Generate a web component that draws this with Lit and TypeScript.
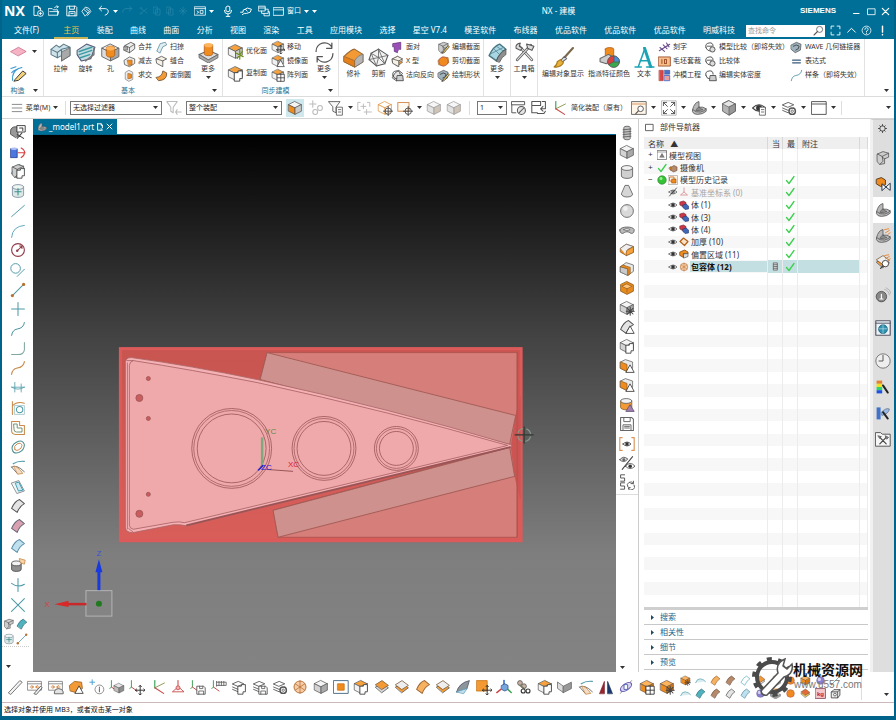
import { LitElement, html, svg, css, nothing } from "lit";
import { customElement, state } from "lit/decorators.js";
import { classMap } from "lit/directives/class-map.js";

const p = (d: string, fill = "none", stroke = "#555", w = 1.3) =>
  svg`<path d=${d} fill=${fill} stroke=${stroke} stroke-width=${w} stroke-linejoin="round" stroke-linecap="round"/>`;
const c = (x: number, y: number, r: number, fill = "none", stroke = "#555", w = 1.3) =>
  svg`<circle cx=${x} cy=${y} r=${r} fill=${fill} stroke=${stroke} stroke-width=${w}/>`;
const cube = (t: string, l: string, r: string, k = "#6b5a48") => svg`
  ${p("M10 2L18 6L10 10L2 6Z", t, k, 0.9)}${p("M2 6L10 10V18L2 14Z", l, k, 0.9)}${p("M18 6V14L10 18V10Z", r, k, 0.9)}`;
const sheet = (f: string, k: string) => p("M2 13Q6 4 12 2L18 7Q12 10 9 18Z", f, k, 1.3);
const slab = (f: string, g: string) => svg`${p("M2 10L10 5L18 11L10 17Z", g, "#555", 1)}${p("M2 7L10 2L18 8L10 13Z", f, "#7a5a3a", 1)}`;
const layersBase = svg`${p("M2 13L9 16L16 13M2 10L9 13L16 10", "none", "#555", 1.1)}${p("M2 6L9 3L16 6L9 9Z", "#fff", "#555", 1.1)}`;

const W = "#ffffff";
const P: Record<string, unknown> = {
  /* solids */
  cubeO: cube("#ffb45c", "#f08c1e", "#d9750f"),
  cubeG: cube("#f4f4f4", "#d3d3d3", "#a9a9a9", "#555"),
  cubeT: cube("#f6a13c", "#f1f1f1", "#c9c9c9", "#555"),
  cubeR: cube("#f4f4f4", "#f08c1e", "#c9c9c9", "#555"),
  cubeF: cube("#f6f6f6", "#e2e2e2", "#cfc4b8", "#999"),
  cubeW: cube("#fff", "#fff", "#fff", "#e0903c"),
  wedge: svg`${p("M2 9L9 4L18 7V14L9 18L2 14Z", "#f08c1e", "#8a5a20", 1)}${p("M2 9L9 4L18 7L12 10Q9 11 9 18", "#efefef", "#777", 1)}${p("M9 18Q8 11 13 10L18 7V14Z", "#f6a13c", "#8a5a20", 0.8)}`,
  frontO: svg`${p("M2 7L9 2L18 5V13L11 18L2 14Z", "#e9e9e9", "#666", 1)}${p("M2 7L11 10V18L2 14Z", "#c9c9c9", "#666", 0.8)}${p("M2 7L5 5L14 8V16L11 18V10Z", "#f08c1e", "#8a5a20", 0.9)}`,
  leftO: svg`${p("M2 5L8 2L17 5V13L10 17L2 13Z", "#e9e9e9", "#666", 1)}${p("M2 5L10 8V17L2 13Z", "#f08c1e", "#8a5a20", 0.9)}`,
  cyl: svg`${p("M3 5V15A7 3 0 0 0 17 15V5", "#cfcfcf", "#555", 1)}<ellipse cx="10" cy="5" rx="7" ry="3" fill="#f2f2f2" stroke="#555"/>`,
  cylO: svg`${p("M2 5V13A7 3 0 0 0 16 13V5", "#f39a35", "#8a5a20", 1)}<ellipse cx="9" cy="5" rx="7" ry="3" fill="#f2f2f2" stroke="#555"/>`,
  cylP: svg`${p("M3 5V15A7 3 0 0 0 17 15V5", "#dce8e6", "#789", 1)}<ellipse cx="10" cy="5" rx="7" ry="3" fill="#eef6f4" stroke="#789"/>${p("M10 7V15M6 11H14", "none", "#3c8f8f")}`,
  cylH: svg`${p("M2 8V15A6 3 0 0 0 14 15V8", "#8f8f8f", "#444", 1)}<ellipse cx="8" cy="8" rx="6" ry="3" fill="#f2f2f2" stroke="#444"/>${p("M12 2L19 4L18 9L13 7Z", "#f6d3a8", "#c98a4a", 1)}`,
  cone: p("M8 3H12L17 14A7 3.5 0 0 1 3 14Z", "#d6d6d6", "#555", 1),
  ball: svg`${c(10, 10, 8, "#d9d9d9", "#555", 1)}${c(8, 7, 3, "#f1f1f1", "none", 0)}`,
  ballO: c(10, 10, 7, "#f08a20", "#a55", 1),
  ballP: svg`${c(10, 10, 7, "#8a7fd0", "#669", 1)}${c(8, 8, 3, "#d6d2f4", "none", 0)}`,
  torus: svg`${p("M1 10C1 5 19 5 19 10C19 15 15 15 13 13C11 12 9 12 7 13C5 15 1 15 1 10Z", "#bdbdbd", "#555", 1)}${p("M6 9.500C8 8 12 8 14 9.500C12 11 8 11 6 9.500Z", "#fff", "#555", 0.8)}`,
  spring: svg`${p("M6 3A4 1.500 0 0 1 14 3V17A4 1.500 0 0 1 6 17Z", "#c4c4c4", "#555", 1)}${p("M5 6L15 5M5 9L15 8M5 12L15 11M5 15L15 14", "none", "#555", 1)}`,
  shell: svg`${p("M10 2L18 6V14L10 18L2 14V6Z", "#e88a1e", "#8a5a20", 1)}${p("M10 5L16 8L10 11L4 8Z", "#ffc078", "#8a5a20", 0.8)}${p("M10 11V15", "none", "#8a5a20", 0.8)}`,
  extrude: svg`${p("M1 7L6 3L9 5L13 2L19 5V13L11 18V13L7 15L1 12Z", "#cfe3ea", "#5d7a86", 1)}${p("M1 7L7 10L11 7L11 13M7 10V15M11 7L19 5", "none", "#5d7a86", 1)}${p("M11 10V18L19 13V6Z", "#a9a9a9", "#666", 0.8)}`,
  revolve: svg`${p("M2 8L11 2L19 5L15 16L6 18L2 12Z", "#c4dde0", "#557", 1)}${p("M4 9L16 5M4 12L16 8M5 15L14 12", "none", "#3d9aa5", 1.4)}${p("M10 18L18 12V6", "none", "#777", 1.4)}`,
  bore: svg`${cube("#efefef", "#dcdcdc", "#a5a5a5", "#666")}${p("M6 6A4 2 0 0 1 14 6V12A4 2.500 0 0 1 6 12Z", "#f08c1e", "#b4611a", 0.8)}<ellipse cx="10" cy="6" rx="4" ry="2" fill="#ffb45c"/>`,
  boss: svg`${p("M1 12L10 8L19 12L10 17Z", "#ddd", "#666", 1)}${p("M1 12V15L10 20L19 15V12L10 17Z", "#aaa", "#666", 0.8)}${p("M6 3V11A4 2 0 0 0 14 11V3Z", "#f08c1e", "#b4611a", 0.8)}<ellipse cx="10" cy="3" rx="4" ry="2" fill="#ffb45c"/>`,
  cap: p("M2 8L8 3L17 4L18 12L10 17L3 15Z", "#f39a35", "#9a5a15", 1),
  patch: svg`${p("M1 9Q8 2 11 2L19 7V14L11 19L1 14Z", "#f39a35", "#9a6a35", 1)}${p("M11 19V13Q14 8 19 7V14Z", "#b5b5b5", "#777", 0.8)}${p("M1 9L11 13V19L1 14Z", "#e8801a", "#9a6a35", 0.8)}`,
  mesh: svg`${p("M10 2L19 8L16 16L8 18L1 12L3 6Z", "#f3f3f3", "#555", 1)}${p("M3 6L10 10L19 8M10 2V10L1 12M10 10L8 18M10 10L16 16M3 6L8 18M10 2L16 16", "none", "#666", 0.8)}`,
  shoe: svg`${p("M2 12Q4 3 10 2L10 9Q15 8 19 11V14Q15 18 8 18Q3 18 2 15Z", "#b8b8b8", "#555", 1)}${p("M2 12Q6 16 12 15Q17 14 19 11", "none", "#555", 1)}${p("M10 9Q7 10 6 13Q11 14 15 12Q12 11 10 9Z", "#8c8c8c", "#555", 0.8)}`,
  block: svg`${p("M3 5L10 2L17 4V9L12 11V17L6 18L3 15Z", "#cdcdcd", "#555", 1)}${p("M3 5L9 8L17 4M9 8L10 14L6 18M12 11L9 9", "none", "#555", 1)}`,
  slabO: slab("#f39a35", "#d5d5d5"),
  slabG: slab("#eee", "#f39a35"),
  slabR: slab("#e06a3a", "#f2c14e"),
  sheetO: sheet("#f7b25f", "#a0683a"),
  sheetB: sheet("#bfe0ee", "#5a8fa6"),
  sheetG: sheet("#e4e4e4", "#555"),
  sheetT: sheet("#4fb3bf", "#33727c"),
  sheetP: sheet("#d9a0b0", "#667"),
  sheetW: sheet("#ffffff", "#5fb0c0"),
  sheetD: sheet("#b58a6a", "#7a5a45"),
  blade: svg`${p("M2 16Q5 5 18 2L15 12Z", "#8b959b", "#556", 1)}${p("M2 16L15 12L11 18Z", "#bfe0ee", "#4f8fae", 0.8)}`,
  purple: p("M3 4L15 2V13Q10 12 10 18L5 16V9H3Z", "#9b50b8", "#5a2a70", 1),
  pinkd: p("M1 10L10 5L19 10L10 15Z", "#f6b3c4", "#c8698a", 0.9),
  sqO: svg`${p("M1 2H19V18H1Z", W, "#4a6f8a", 1.2)}${p("M6 6H14V14H6Z", "#f08c1e", "#c9700f", 1)}`,
  sqM: p("M1 2H14V15H1Z", "#f39a35", "#c9700f", 1),
  skewG: svg`${p("M1 4L8 9V17L1 12Z", "#ddd", "#666", 1)}${p("M8 9L18 4V12L8 17Z", "#999", "#666", 1)}`,
  quilt: svg`${sheet("#a8d6e2", "#4a7480")}${p("M7 7L13 13M4 11L16 5M9 4L16 9", "none", "#5c8c98", 0.8)}${p("M9 18Q12 10 18 7V12Q14 14 12 19Z", "#8f8f8f", "#555", 0.8)}`,

  /* modifiers drawn at the lower right */
  copy: p("M9 9H13V7H18V16H15V19H9Z", W, "#444", 1.1),
  tri: p("M14 9L19 18H9Z", W, "#444", 1.1),
  triP: p("M14 10L19 18H9Z", "#a080b0", "#604a70", 1),
  star: p("M14 9V19M9 14H19M10.500 10.500L17.500 17.500M17.500 10.500L10.500 17.500", "none", "#444", 1.3),
  move: p("M14 8V20M8 14H20M12.500 9.500L14 8L15.500 9.500M12.500 18.500L14 20L15.500 18.500M9.500 12.500L8 14L9.500 15.500M18.500 12.500L20 14L18.500 15.500", "none", "#333", 1.2),
  grid: p("M9 9H19V19H9ZM14 9V19M9 14H19", W, "#333", 1.1),
  lens: svg`${c(13, 12, 4, W, "#444", 1.2)}${p("M10 15L7 18", "none", "#444", 1.6)}`,
  tgt: svg`${c(14, 14, 4, "none", "#444", 1.1)}${p("M14 8V20M8 14H20", "none", "#444", 1.1)}`,
  disk: svg`${p("M9 9H17L19 11V19H9Z", W, "#555", 1.1)}${p("M12 9V12H16V9M11 19V15H17V19", "none", "#555", 1)}`,
  cog: svg`${c(14, 14, 4, W, "#555", 1.8)}${c(14, 14, 1.500, "none", "#555", 1)}`,
  pen: p("M9 17L17 7L19 9L11 18L8 19Z", "#f5d26a", "#333", 1.1),
  spark: p("M12 18L18 10M11 12L19 16M15 8V19", "none", "#6e8f1a", 1.4),
  calc: p("M11 9H18V19H11ZM13 12H16M13 15H16", W, "#555", 1),

  /* curves */
  line: p("M2 17L18 3", "none", "#4f9aa8", 1.2),
  arc: p("M2 18Q3 4 18 3", "none", "#5fa6b8", 1.2),
  circ: svg`${c(10, 10, 8, "none", "#903a48", 1.4)}${c(9, 11, 1.500, "#903a48", "none", 0)}${p("M9 11L15 5M12 5H15V8", "none", "#903a48", 1.3)}`,
  tang: svg`${c(7, 8, 6, "none", "#4f9aa8", 1.2)}${p("M9 18L18 9", "none", "#4f9aa8", 1.2)}`,
  seg: svg`${p("M3 17L17 3", "none", "#4f9aa8", 1.3)}${c(3, 17, 2, "#b87333", "none", 0)}${c(17, 3, 2, "#b87333", "none", 0)}`,
  plus: p("M10 2V18M2 10H18", "none", "#4f9aa8", 1.3),
  spl: p("M2 18Q3 11 9 10Q17 9 18 2", "none", "#3f8c9c", 1.2),
  jcv: p("M18 2V11Q17 17 10 17H2", "none", "#7fa8a0", 1.3),
  splO: p("M2 18Q3 11 9 10Q17 9 18 2", "none", "#c98a4a", 1.4),
  cross2: p("M6 3V15M2 9H18M14 5V15M2 9Q10 14 18 9", "none", "#4f9aa8", 1),
  prjc: svg`${p("M3 2V18M3 7Q9 1 18 4", "none", "#c98a4a", 1.3)}${c(12, 12, 4, "none", "#4f9aa8", 1.3)}${p("M6 7H18V18H6Z", "none", "#8fb9c0", 0.9)}`,
  offs: svg`${p("M2 2H12V7H18V18H7Q2 18 2 13Z", "none", "#c98a4a", 1.3)}${p("M5 5H9V10H15V15H8Q5 15 5 12Z", "none", "#6f8f6f", 1.2)}`,
  ringc: svg`${p("M3 14Q1 8 8 4Q16 0 18 7Q18 14 11 17Q5 19 3 14Z", "none", "#4f8f90", 1.3)}${p("M6 13Q4 9 9 6Q14 4 15 8Q15 12 10 14Q7 15 6 13Z", "none", "#c98a4a", 1.2)}`,
  sec: svg`${p("M2 10Q8 6 18 16M2 10L9 18", "none", "#555", 1)}${p("M5 9Q10 9 16 18L10 19Z", "#f4dcc4", "#c98a4a", 1)}${p("M4 6Q10 2 18 3", "none", "#4f9aa8", 1.4)}`,
  sheetV: svg`${p("M2 5L11 2L18 15L9 18Z", "#eef7f9", "#777", 1)}${p("M7 5L11 4L16 14L11 15Z", "#cfeaf0", "#3b9ab0", 1.2)}`,
  xcv: p("M2 2L18 18M18 2L2 18", "none", "#4f9aa8", 1.3),
  xlate: p("M10 2V18M2 8Q10 14 18 9", "none", "#4f9aa8", 1.3),
  bl: p("M1 14Q4 6 10 7T19 12", "#d8ecef", "#4f9aa8", 1.2),
  sketch: svg`${p("M3 18Q2 8 10 4M1 4L7 2M2 9Q6 5 14 3", "none", "#3b9ad0", 1.3)}${p("M6 17L15 7L19 10L10 18L5 19Z", "#f3d27a", "#333", 1.1)}`,

  /* datum, measuring and view */
  csys: svg`${p("M6 2V11", "none", "#38a050", 1.4)}${p("M6 11L18 5", "none", "#8a9a50", 1.2)}${p("M6 11L17 18", "none", "#c84848", 1.4)}`,
  axes: svg`${p("M10 2V10", "none", "#c84848", 1.3)}${p("M10 10L3 16H17Z", "none", "#c84848", 1.1)}${c(10, 11, 2.500, "#f5b0b0", "#c84848", 1)}`,
  small: svg`${p("M3 2V10L1 12", "none", "#38a050", 1.2)}${p("M3 10L10 15", "none", "#c84848", 1.2)}`,
  part: svg`<g transform="translate(5 4) scale(.75)">${cube("#e4e4e4", "#bdbdbd", "#8e8e8e", "#555")}</g>`,
  bluec: svg`${p("M10 2V8", "none", "#3a6fd0", 2)}${p("M7 8L11 6L15 8V13L11 15L7 13Z", "#7aa6e0", "#2a4f90", 1)}${p("M6 13L1 17", "none", "#c84848", 1.8)}${p("M15 13L19 17", "none", "#38a050", 1.8)}`,
  ruler: p("M2 17L16 2L19 4L5 19Z", "#f4f4f4", "#666", 1.1),
  ruler2: p("M9 18L17 9L19 11L12 19Z", "#f4f4f4", "#555", 1.1),
  dome: p("M8 18V16Q9 12 13 12Q18 12 19 16V18Z", "#e4e4e4", "#555", 1.1),
  meas: svg`${p("M1 3H18V14H1ZM1 6H18", W, "#777", 1)}${p("M4 10H8M11 10H15M6 8L8 10L6 12M13 8L11 10L13 12", "none", "#d07a30", 1.1)}`,
  info: svg`${c(13, 13, 5.500, W, "#777", 1)}${p("M13 12V16M13 10V10.500", "none", "#666", 1.3)}${p("M4 1V7M1 4H7", "none", "#3b9ad0", 1.1)}`,
  note: p("M7 3V9M7 4H19V8H7M10 3V8M13 3V8M16 3V8", "none", "#555", 1),
  layers: layersBase,
  mirror: svg`${p("M2 18L8 3V18Z", "#9a2430", "#70141e", 0.8)}${p("M18 18L12 3V18Z", "#1c3a70", "#10244a", 0.8)}`,
  orbit: svg`${p("M3 18L17 2", "none", "#777", 1)}<ellipse cx="10" cy="10" rx="8" ry="4" transform="rotate(-35 10 10)" fill="#d9d4f0" stroke="#6a5fb0" stroke-width="1.500"/>${p("M8 7H12V13H8Z", W, "#3b56a8", 1)}`,
  people: svg`${c(5, 5, 3, "#c9b0a0", "#555", 1)}${c(10, 9, 3, "#c5b5a5", "#555", 1)}${p("M5 8L10 12", "none", "#776", 2)}${c(9, 15, 2.500, W, "#333", 1.4)}${c(15, 15, 2.500, W, "#333", 1.4)}`,
  eye: svg`${p("M2 10Q10 2 18 10Q10 18 2 10Z", W, "#444", 1.4)}${c(10, 10, 3.500, "#333", "#333", 0.5)}`,
  eyeBr: svg`${p("M4 2H1V18H4M16 2H19V18H16", "none", "#d9935a", 1.4)}${p("M5 10Q10 5 15 10Q10 15 5 10Z", W, "#444", 1.1)}${c(10, 10, 2.200, "#333", "none", 0)}`,
  eyeOff: svg`${p("M2 10Q10 2 18 10Q10 18 2 10Z", W, "#444", 1.4)}${c(10, 10, 3.500, "#888", "#333", 0.5)}${p("M3 18L17 2", "none", "#333", 1.6)}`,
  eyeSw: svg`${p("M4 18L17 2", "none", "#444", 1.3)}${p("M1 6Q5 0 11 5Q6 11 1 6Z", "#ddd", "#444", 1)}${c(6, 6, 1.800, "#666", "none", 0)}${p("M8 14Q14 7 20 14Q14 20 8 14Z", W, "#444", 1)}${c(14, 14, 2.200, "#333", "none", 0)}`,
  ss: svg`${p("M7 1H2V5H7V9H2M7 11H2V15H7V19H2", "none", "#555", 1.2)}${p("M11 16A4 4 0 0 1 18 12M18 9V12H15M19 14A4 4 0 0 1 12 18M12 19V17H14", "none", "#555", 1.2)}`,
  floppy: svg`${p("M2 2H16L18 4V18H2Z", W, "#666", 1.3)}${p("M6 2V7H14V2M5 18V11H15V18M7 13H13M7 15H13", "none", "#666", 1.2)}`,
  brackD: p("M4 3H1V13H4M13 3H16V8M8 5V11M5 8H11M12 12V18M9 15H18", "none", "#bbb", 1.2),
  linkG: svg`${p("M6 1V9M2 5H10", "none", "#bbb", 1.3)}${c(15, 10, 3, "none", "#bbb", 1.3)}${c(9, 15, 3, "none", "#bbb", 1.3)}`,
  funnel: p("M1 2H15L10 9V16L6 14V9Z", "#f8f8f8", "#666", 1.2),
  funnelG: svg`${p("M1 2H14L9 9V16L6 14V9Z", "none", "#bbb", 1.3)}${p("M12 15H19M14 12L12 15L14 18", "none", "#bbb", 1.3)}`,
  rectO: p("M1 3H15V14H1Z", "#fffaf2", "#d9935a", 1.3),
  ban: svg`${p("M1 2H17V6H1ZM1 6V16H6", W, "#555", 1.2)}${c(13, 13, 5, "#e6e6e6", "#555", 1.3)}${p("M10 16L16 10", "none", "#555", 1.3)}`,
  swap: p("M1 2H12V7H1ZM1 7V16H8M14 2H18V11H12M15 8L12 11L15 14M8 17H16L18 14", "none", "#555", 1.3),
  fitS: svg`${p("M1 2H19V18H1Z", "#fff6ea", "#666", 1.2)}${p("M1 5H19", "none", "#d9935a", 1.2)}${c(12, 11, 3.500, W, "#555", 1.2)}${p("M9 14L6 17", "none", "#555", 1.5)}`,
  fitF: svg`${p("M1 1H19V19H1Z", "none", "#999", 0.8)}${p("M3 7V3H7M13 3H17V7M17 13V17H13M7 17H3V13M3 3L8 8M17 3L12 8M17 17L12 12M3 17L8 12", "none", "#444", 1.1)}`,
  hex: svg`${p("M10 1L18 5V14L10 19L2 14V5Z", "#b5b5b5", "#555", 1)}${p("M10 1L18 5L10 9L2 5Z", "#e5e5e5", "#555", 0.8)}${p("M10 9V19L18 14V5Z", "#989898", "#555", 0.8)}`,
  win: svg`${p("M1 2H19V18H1Z", W, "#555", 1.2)}${p("M1 5H19", "none", "#555", 1.2)}`,
  box: p("M2 3H18V17H2Z", W, "#444", 1.8),

  /* ribbon specials */
  cycle: p("M2 9A8 8 0 0 1 17 5M17 1V6H12M18 11A8 8 0 0 1 3 15M3 19V14H8", "none", "#555", 1.2),
  tools: svg`${p("M4 3L17 17", "none", "#555", 2.6)}${p("M4 3L17 17", "none", "#eee", 1.2)}${p("M16 3L3 17", "none", "#555", 2.6)}${p("M16 3L3 17", "none", "#ddd", 1.2)}${p("M2 6Q1 2 6 1L5 4L8 6L6 8ZM12 2L19 4L17 8L13 6Z", "#ddd", "#555", 1)}`,
  brush: svg`${p("M19 1L10 11", "none", "#7a6a4a", 2)}${p("M11 9L13 11L8 15L7 13Z", "#ddd", "#666", 1)}${p("M7 12L10 15Q7 20 1 19Q4 17 4 14Z", "#e8b23a", "#a8761a", 1)}`,
  palette: svg`${p("M6 2V8A4 2 0 0 0 14 8V2A4 1.500 0 0 0 6 2Z", "#f08c1e", "#b4611a", 0.8)}${p("M1 11L9 7L14 10L7 16L1 14Z", "#ccc", "#666", 1)}${c(14, 14, 5.500, "#3aa850", "#555", 0.8)}${p("M14 14V8.500A5.500 5.500 0 0 1 19.500 14Z", "#4a90d8", "#555", 0.6)}${p("M14 14L9 17A5.500 5.500 0 0 1 14 8.500Z", "#d84040", "#555", 0.6)}`,
  letterA: svg`${p("M1 19H7M12 19H19M4 19L10 2.500", "none", "#1ba3b5", 1.4)}${p("M10 1L16 19", "none", "#1ba3b5", 2.8)}${p("M6 13H13", "none", "#1ba3b5", 1.4)}`,
  engr: p("M2 15L18 5M3 10L10 16M8 6L14 12M13 3L17 9", "none", "#6a4a8a", 1.6),
  blank: svg`${p("M1 3H19V17H1Z", "#f7c08a", "#a0522d", 1.4)}${p("M6 7V13M10 7V13H13V7Z", "none", "#a0522d", 1.6)}`,
  punch: svg`${p("M2 2H8V18H2Z", "#d84848", "#a03030", 0.8)}${p("M10 2H18V8H10Z", "#4a70c8", "#2a4080", 0.8)}${p("M10 10H18V18H10Z", "#e8a0a0", "#4a70c8", 1.4)}`,
  comp: svg`${p("M3 10Q1 4 8 3Q14 2 14 8M3 10Q5 16 10 15", "none", "#444", 1.4)}${c(13, 13, 4, "#ddd", "#444", 1.3)}${p("M5 8H12", "none", "#444", 1.3)}`,
  dens: svg`${p("M3 10Q1 4 8 3Q14 2 14 8M3 10Q5 16 8 15", "none", "#444", 1.4)}${p("M10 10H18L19 18H9Z", "#ccc", "#444", 1.3)}`,
  wave: svg`${p("M2 6L10 2L17 5L16 14L8 18L2 13Z", "#9fb3bf", "#444", 1)}${p("M5 8Q10 4 14 8Q14 13 9 14", "none", "#444", 1.4)}`,
  eq: p("M4 8H16M4 12H16", "none", "#3a5a7a", 1.8),
  union: svg`${p("M3 7L12 2L18 5V12L10 18L3 15Z", "#ececec", "#555", 1.3)}${p("M3 7L10 10L18 5M10 10V18", "none", "#555", 1.2)}${p("M1 9H7V14H1Z", "#b0b0b0", "#555", 1)}`,
  subt: svg`${p("M2 8L10 3L18 6V13L10 18L3 15Z", "#ececec", "#555", 1.2)}${p("M7 8H14V15L9 16Z", "#f08c1e", "#a05a1a", 1)}`,
  inter: svg`${p("M4 5L9 2L15 5V16L9 19L4 16Z", "#ececec", "#888", 1.2)}${p("M8 7L13 8V14L8 15Z", "#f08c1e", "#a05a1a", 1)}`,
  sweep: p("M3 15L8 4L16 2L18 6L12 9L8 18Z", "#dfeef2", "#5d8a9a", 1.2),
  sew: svg`${p("M2 6L10 2L18 6L12 9V18L3 13Z", "#f7f2e6", "#555", 1.3)}${p("M2 6L12 9", "none", "#555", 1.2)}`,
  blend: p("M2 13Q11 12 12 3L18 6Q19 17 6 18Z", "#f39a35", "#6a4a2a", 1.2),

  /* title bar, white */
  tNew: svg`${p("M8 16H3V2H10L13 5V8M10 2V5H13", "none", W, 1.4)}${c(13, 13, 4.500, "none", W, 1.3)}${p("M13 11V15M11 13H15", "none", W, 1.3)}`,
  tOpen: p("M1 6H7L9 8H16V17H1ZM3 11H18L16 17M11 4Q13 2 17 3M15 1L17 3L15 5", "none", W, 1.4),
  tSave: p("M2 2H16L18 4V18H2ZM6 2V7H14V2M5 18V11H15V18M8 14H12", "none", W, 1.5),
  tPlane: p("M2 9L8 2L14 4L17 8L8 18ZM6 7L12 12M9 5L14 9M12 17L18 10", "none", W, 1.5),
  tUndo: p("M6 2L2 6L6 10M2 6H12Q18 7 17 12Q16 16 12 17", "none", W, 1.5),
  tRedo: p("M14 2L18 6L14 10M18 6H8Q2 7 3 12", "none", W, 1.4),
  tCut: p("M4 5L16 14M4 14L16 5M2 14A2 2 0 1 0 6 15M2 5A2 2 0 1 1 6 5", "none", W, 1.4),
  tDoc: p("M3 2H11V14H3ZM8 6H16V18H8Z", "none", W, 1.4),
  tPage: p("M4 2H13L16 6V12M4 2V18H10M13 14L16 18L10 18M13 2V6H16", "none", W, 2.4),
  tStar: p("M10 2V18M2 10H18M5 5L15 15M15 5L5 15", "none", W, 1.3),
  tWin: p("M1 3H19V17H1ZM1 6H19M5 10L8 12L5 14M11 9H15V14H11Z", "none", W, 1.3),
  tMic: p("M7 3Q10 0 13 3V10Q10 13 7 10ZM4 9Q4 15 10 15Q16 15 16 9M10 15V19M7 19H13", "none", W, 1.6),
  tPlug: p("M1 12H5Q4 7 9 7L12 5L19 7L17 12L11 14H7L4 16M9 7L12 10", "none", W, 1.6),
  tCasc: p("M1 2H12V10H1ZM1 5H12M6 10V14H17V7H12M10 14V18H19V11H17", "none", W, 1.4),
  tFrame: p("M1 3H19V17H1ZM1 7H19", "none", W, 1.5),
  tFit: p("M2 7V2H7M13 2H18V7M18 13V18H13M7 18H2V13", "none", W, 1.6),
  tUp: p("M3 13L10 6L17 13", "none", W, 1.8),
  tHelp: svg`${c(10, 10, 8, "none", W, 1.4)}${p("M7 8Q7 5 10 5Q13 5 13 8Q13 10 10 11V12.500M10 15V15.500", "none", W, 1.5)}`,
  tBang: p("M10 2V13M10 17V18", "none", W, 2.6),
  tMin: p("M3 15H14", "none", W, 2.2),
  tMax: p("M2 4H18V17H2Z", "none", W, 1.8),
  tX: p("M3 3L17 17M17 3L3 17", "none", W, 2.8),
  search: svg`${c(12, 8, 5.500, "none", "#555", 1.4)}${p("M8 12L2 18", "none", "#555", 2.4)}`,
  burger: p("M2 4H18M2 10H18M2 16H18", "none", "#777", 1.4),

  /* navigator */
  chk: p("M3 11L8 17L18 3", "none", "#3ccf4e", 2.6),
  dotG: svg`${c(10, 10, 8.500, "#35c235", "#2a7a2a", 1.2)}${c(8, 7, 3, "#9af09a", "none", 0)}`,
  view: svg`${p("M1 1H19V19H1Z", W, "#444", 1.2)}${p("M1 4H19", "none", "#444", 1)}${p("M6 14L10 7L14 14Z", "#888", "#444", 1)}`,
  cam: svg`${p("M5 9L12 5L18 8V15L11 18L5 14Z", "#b58a6a", "#6a4a3a", 1.2)}${p("M2 10L6 7V14Z", "#f08c1e", "#6a4a3a", 1)}`,
  hist: svg`${p("M1 1H19V19H1Z", "#fff3e6", "#999", 1.2)}${p("M4 4H12V12H4Z", "#fff", "#d07a30", 2)}${p("M8 8H16V16H8Z", "#f08c1e", "#8a4a1a", 1.2)}`,
  datum: p("M10 2V10L3 16H17L10 10", "none", "#d88a8a", 1.6),
  body: svg`${p("M2 4L9 2L14 5V12L7 13L2 10Z", "#c83848", "#70202a", 1.2)}${p("M8 10L14 8L19 12V18L12 19L8 15Z", "#4068b8", "#203a70", 1.2)}`,
  thick: p("M2 9L9 2L18 9L11 17Z", "#fbe3c8", "#b4611a", 2.4),
  offr: svg`${p("M2 6L11 2L18 6V10L9 9V17L2 13Z", "#f08c1e", "#6a3a10", 1.4)}${p("M9 10L18 9V15L10 18Z", "#ddd", "#444", 1.2)}`,
  wrapb: svg`${c(10, 10, 7.500, "#f7cda8", "#b4713a", 1.2)}${p("M4 6L16 14M16 6L4 14M10 2V18", "none", "#b4713a", 1)}`,
  tower: p("M6 2H14V18H6ZM6 6H14M6 10H14M6 14H14", "#ddd", "#555", 1.6),

  /* resource bar */
  gear: svg`${c(10, 10, 6, "none", "#444", 2)}${p("M10 1V4M10 16V19M1 10H4M16 10H19M4 4L6 6M14 14L16 16M16 4L14 6M4 16L6 14", "none", "#444", 2)}`,
  constr: svg`${p("M2 4L8 2L13 5V11L7 13L2 10Z", "#f08c1e", "#5a3a1a", 1.2)}${p("M9 10L19 18V9L9 18Z", W, "#234", 1.2)}`,
  glow: p("M12 2L17 1M13 6L18 3M19 6L16 8", "none", "#e88a3a", 1.2),
  radio: svg`${c(8, 12, 6.500, "#888", "#444", 1)}${p("M8 9V15M6 15H10", "none", W, 1.4)}${p("M12 3Q17 4 18 10M14 1Q19 3 20 8", "none", "#aaa", 1)}`,
  web: svg`${p("M1 1H19V19H1Z", "#eaf2f5", "#556", 1.4)}${p("M1 4H19", "none", "#556", 1.2)}${c(10, 11.500, 5.500, "#2f8fae", "#1a5f7a", 1)}${p("M5 11H15M10 6V17", "none", "#bfe6f0", 0.8)}`,
  clock: svg`${c(10, 10, 9, "#eee", "#777", 1.2)}${p("M10 3V10H5", "none", "#555", 1.2)}`,
  rain: svg`${p("M2 2H9V6H2Z", "#e08030", "none", 0)}${p("M2 6H9V10H2Z", "#f0e020", "none", 0)}${p("M2 10H9V14H2Z", "#30d070", "none", 0)}${p("M2 14H9V18H2Z", "#2050e0", "none", 0)}${p("M10 8L16 17", "none", "#222", 2.4)}`,
  wand: svg`${p("M2 3H7V18H2Z", "#3f72c8", "none", 0)}${p("M8 9Q14 3 18 5Q17 11 9 13Z", "#9ab8ea", "#567", 0.8)}${p("M10 9L16 17", "none", "#222", 2.4)}`,
  toolb: svg`${p("M1 2H7L9 4H19V19H1Z", "#f6f6f6", "#555", 1.2)}${p("M6 8L14 16M14 8L6 16", "none", "#444", 1.5)}${p("M4 6L8 7L6 9ZM13 6L17 8L15 10Z", "#888", "#444", 0.8)}`,
  kg: svg`${p("M1 1H19V19H1Z", "#f4c8cc", "#7a3a4a", 1.4)}<text x="10" y="14" font-size="11" font-family="Liberation Sans, sans-serif" font-weight="700" text-anchor="middle" fill="#c01830">kg</text>`,
  boxes: svg`${p("M3 7H14V18H3ZM3 7L7 3H18L14 7M18 3V13L14 18", "#eee", "#333", 1.4)}${c(9, 12, 2.500, W, "#333", 1.2)}`,
  hold: svg`${p("M1 7Q3 2 10 4V15L7 17L1 13Z", "#999", "#444", 1)}${p("M9 2H19V10H9Z", W, "#444", 1.2)}${p("M12 5H16V8M9 13L17 18M15 11L9 18", "none", "#444", 1.3)}`,
  blueb: svg`${p("M1 6H9V17H1Z", "#4a78e0", "#223a90", 1)}<ellipse cx="5" cy="6" rx="4" ry="1.500" fill="#a8bdf5"/>${p("M10 11H19M14 5Q19 8 18 11Q18 15 14 17", "none", "#d84040", 1.4)}`,
};

const icon = (names: string, size = 16) => svg`
  <svg viewBox="0 0 20 20" width=${size} height=${size} aria-hidden="true">${names.split(" ").map((n) => P[n] ?? nothing)}</svg>`;
const caret = () => html`<svg class="caret" viewBox="0 0 5 3" width="5" height="3" aria-hidden="true"><path d="M0 0H5L2.500 3Z" fill="currentColor"/></svg>`;

type Item = [string, string];
const MENU = ["文件(F)", "主页", "装配", "曲线", "曲面", "分析", "视图", "渲染", "工具", "应用模块", "选择", "星空 V7.4", "模圣软件", "布线器", "优品软件", "优品软件", "优品软件", "明威科技"];

const LEFT = ["hold", "blueb", "sheetB block copy", "cylP", "line", "arc", "circ", "tang", "seg", "plus", "spl", "jcv", "splO", "cross2", "prjc", "offs", "ringc", "sec", "sheetV", "sheetG", "sheetP", "sheetB", "cylH", "xlate", "xcv"];
const SOLIDS = ["spring", "cubeG", "cyl", "cone", "ball", "torus", "wedge", "frontO", "shell", "cubeG star", "sheetG tri", "cubeG copy", "leftO tri", "leftO tri", "cylO triP", "floppy", "eyeBr", "eyeSw", "ss"];
const BOTTOM = ["ruler", "meas ruler2", "meas dome", "cap tri", "info", "small part", "small move", "csys", "axes", "small disk", "small note", "layers copy", "layers disk", "layers cog", "wrapb", "cubeG", "sqO", "cubeT copy", "slabO", "slabG", "sheetO", "slabG", "blade", "sqM move", "bluec", "people", "cubeT copy", "skewG", "sec", "mirror", "orbit", "cubeO grid", "cubeO star"];
const MINI_A = ["cubeO star", "bl", "sheetO", "sheetD", "sheetW", "slabO", "boss", "ballO", "cubeO", "ballP", "seg"];
const MINI_B = ["bl", "sheetT", "sheetD", "sheetG", "sheetB", "ballP", "boss", "ballO", "slabR", "kg", "boxes"];
const RESOURCE: [string, string][] = [["gear", "top"], ["block", ""], ["constr", ""], ["shoe", "on"], ["shoe glow", ""], ["slabG lens glow", ""], ["radio", "wide"], ["web", "wide"], ["clock", "wide"], ["rain", ""], ["wand", ""], ["toolb", ""]];

interface Row { d: number; t: string; i: string[]; x?: string; ok?: boolean; k?: string }
const TREE: Row[] = [
  { d: 0, t: "模型视图", i: ["view"], x: "+" },
  { d: 0, t: "摄像机", i: ["chk", "cam"], x: "+" },
  { d: 0, t: "模型历史记录", i: ["dotG", "hist"], x: "−", ok: true },
  { d: 1, t: "基准坐标系 (0)", i: ["eyeOff", "datum"], ok: true, k: "dim" },
  { d: 1, t: "体 (1)", i: ["eye", "body"], ok: true },
  { d: 1, t: "体 (3)", i: ["eye", "body"], ok: true },
  { d: 1, t: "体 (4)", i: ["eye", "body"], ok: true },
  { d: 1, t: "加厚 (10)", i: ["eye", "thick"], ok: true },
  { d: 1, t: "偏置区域 (11)", i: ["eye", "offr"], ok: true },
  { d: 1, t: "包容体 (12)", i: ["eye", "wrapb"], ok: true, k: "sel" },
];

@customElement("app-root")
export class AppRoot extends LitElement {
  @state() private tab = 1;

  static styles = css`
    :host {
      display: flex; flex-direction: column; box-sizing: border-box; height: 100vh; min-width: 800px;
      border: solid #00638a; border-width: 0 2px 4px; background: #fff; color: #333; overflow: hidden;
      font: 7px/12px "Noto Sans", "Noto Sans CJK SC", sans-serif;
    }
    * { box-sizing: border-box; }
    svg { display: block; flex: none; }
    button { font: inherit; color: inherit; background: none; border: 0; padding: 0; margin: 0; display: flex; align-items: center; justify-content: center; white-space: nowrap; flex: none; }
    .title { display: flex; align-items: center; height: 22px; background: #006f97; color: #fff; font-size: 8px; flex: none; padding: 0 4px 0 2px; }
    .logo { font: 700 14px/22px "Open Sans", "Noto Sans", sans-serif; width: 28px; }
    .title .tools { display: flex; align-items: center; gap: 3px; }
    .title .tools span { font-size: 7px; }
    .title .gapped { margin-right: 3px; }
    .faded { opacity: 0.15; }
    .title h1 { flex: 1; text-align: center; font: inherit; margin: 0; }
    .brand { font: 700 8px/22px "Liberation Sans", sans-serif; margin-right: 16px; }
    .title .wins { display: flex; gap: 5px; }
    .menu { display: flex; align-items: center; height: 17px; background: #006f97; color: #fff; font-size: 8px; flex: none; padding: 0 4px 0 12px; }
    .menu nav { display: flex; flex: 1; justify-content: space-between; height: 100%; margin-right: 11px; }
    .menu nav button { padding: 0 9px; margin: 0 -9px; border-bottom: 2px solid transparent; }
    .menu nav button:first-child { margin-right: -2px; }
    .menu nav button.on { color: #ecc04e; border-color: #c9b45a; }
    .find { display: flex; align-items: center; background: #fff; height: 12px; width: 79px; padding: 0 1px 0 2px; flex: none; }
    .find input { flex: 1; min-width: 0; border: 0; padding: 0; outline: 0; font: inherit; font-size: 7px; height: 10px; background: none; }
    .find input::placeholder { color: #999; }
    .menu .right { display: flex; width: 62px; justify-content: space-around; margin-left: 3px; flex: none; }

    .ribbon { display: flex; height: 58px; flex: none; border-bottom: 1px solid #dcdcdc; }
    .group { display: flex; flex-direction: column; border-right: 1px solid #e2e2e2; }
    .group.rest { flex: 1; border: 0; }
    .row { display: flex; flex: 1; align-items: flex-start; padding-top: 1px; }
    .glabel { display: flex; align-items: center; height: 11px; color: #2b6f8c; }
    .glabel span { flex: 1; text-align: center; }
    .glabel svg { margin-right: 5px; color: #333; }
    .big { flex-direction: column; padding-top: 2px; width: 25px; }
    .big.low { padding-top: 7px; }
    .big .caret { margin-top: 1px; }
    .w28 { width: 28px; } .w26 { width: 26px; } .w42 { width: 42px; } .w50 { width: 50px; }
    .col { display: flex; flex-direction: column; }
    .col button { height: 14px; gap: 2px; justify-content: flex-start; }
    .col.two button { height: 22px; }
    .pad { padding-left: 4px; } .pad2 { padding-left: 2px; }
    .c32 { width: 32px; } .c38 { width: 39px; } .c42 { width: 44px; } .c46 { width: 46px; } .c74 { width: 74px; } .c86 { width: 86px; }

    .select { display: flex; align-items: center; height: 22px; flex: none; padding: 0 3px 0 6px; border-bottom: 1px solid #d5d5d5; gap: 4px; }
    .select .main { display: flex; align-items: center; gap: 3px; width: 53px; }
    .sep { width: 1px; height: 14px; background: #ddd; flex: none; }
    .sep.mid { margin: 0 3px; }
    .combo { display: flex; align-items: center; border: 1px solid #777; height: 14px; padding: 0 3px 0 2px; flex: none; background: #fff; }
    .combo select { appearance: none; border: 0; outline: 0; background: none; font: inherit; color: #222; flex: 1; padding: 0; min-width: 0; height: 12px; }
    .w92 { width: 92px; } .w96 { width: 96px; } .w30 { width: 30px; }
    .hot { background: #cfe8ee; padding: 1px; }
    .tail { display: flex; align-items: center; gap: 4px; }
    .cluster { display: flex; align-items: center; gap: 5px; }
    .push { margin-left: auto; }

    .main-area { display: flex; flex: 1; min-height: 0; }
    .left { display: flex; flex-direction: column; width: 31px; padding: 5px 0 0; flex: none; }
    .left .list { display: flex; flex-direction: column; flex: 1; justify-content: space-between; align-items: center; }
    .pairs { display: grid; grid-template-columns: 13px 13px; justify-content: center; margin-right: 4px; padding-top: 3px; border-bottom: 1px dotted #ccc; }
    .pairs button { height: 15px; }
    .foot { display: flex; align-items: center; height: 25px; padding: 14px 0 0 4px; }
    .work { display: flex; flex-direction: column; flex: 1; min-width: 0; }
    .tabs { display: flex; height: 16px; border-bottom: 1px solid #00638a; flex: none; }
    .tab { display: flex; align-items: center; gap: 2px; padding: 0 4px; background: #006f97; color: #fff; font-size: 8px; }
    .view { flex: 1; min-height: 0; background: linear-gradient(#000, #424242 37%, #7e7e7e 78%, #838383); }
    .view svg { width: 100%; height: 100%; }
    .solids { display: flex; flex-direction: column; width: 23px; flex: none; align-items: center; border-right: 1px solid #ccc; padding-top: 6px; }
    .solids .list { display: flex; flex-direction: column; flex: 371; justify-content: space-between; }
    .solids .end { flex: 177; display: flex; align-items: flex-end; align-self: stretch; padding: 0 0 3px 4px; border-top: 1px solid #ddd; margin-top: 3px; }
    .nav { display: flex; flex-direction: column; width: 231px; flex: none; padding: 0 2px 2px 5px; }
    .nav h2 { display: flex; align-items: center; gap: 6px; font: inherit; font-size: 8px; margin: 0 0 2px; height: 16px; padding-left: 1px; }
    .nav .grid { flex: 1; min-height: 0; border-bottom: 3px solid #cfcfcf; }
    table { width: 100%; height: 100%; border-collapse: collapse; table-layout: fixed; font-size: 8px; line-height: 11px; }
    th, td { padding: 0; font-weight: 400; text-align: left; border-right: 1px solid #ececec; height: 12px; }
    th { background: #efefef; border-color: #d8d8d8; padding-left: 4px; }
    tbody tr:nth-child(even) { background: #f7f7f7; }
    td > div { display: flex; align-items: center; height: 11px; gap: 1px; white-space: nowrap; }
    td.mid svg { margin: 0 auto; }
    .label { padding-left: 1px; }
    .tog { font: 8px/10px "Liberation Mono", monospace; width: 12px; justify-content: flex-start; padding-left: 4px; }
    .child { padding-left: 24px; }
    .dim { color: #a5a5a5; }
    .sel .label { font-weight: 700; color: #111; flex: 1; background: #c4dfe1; line-height: 11px; }
    .sel td.hl { background: #c4dfe1; }
    .k1 { width: 15px; } .k4 { width: 62px; } .k5 { width: 8px; }
    .acc { height: 15px; border-bottom: 1px solid #c8c8c8; color: #1f6487; font-size: 8px; justify-content: flex-start; gap: 6px; padding-left: 7px; }
    .rail { display: flex; flex-direction: column; width: 24px; flex: none; background: #dedede; border-left: 3px solid #f1f1f1; border-top: 1px solid #ccc; }
    .rail button { height: 26px; padding-right: 2px; }
    .rail .top { height: 16px; margin-bottom: 9px; }
    .rail .wide { margin: 7px 0 0; }
    .rail .on { background: #fff; }

    .bottom { display: flex; align-items: center; height: 31px; flex: none; border-bottom: 1px solid #c9b9b9; position: relative; padding: 0 3px 0 5px; }
    .bottom .list { display: flex; flex: 1; justify-content: space-between; }
    .mini { display: grid; grid-template-columns: repeat(11, 15px); margin-left: 3px; width: 184px; border-right: 1px solid #ddd; }
    .mini button { height: 13px; }
    .bottom > .caret { margin: 14px 2px 0 22px; }
    .mark { position: absolute; right: 31px; bottom: 4px; display: flex; align-items: center; color: #111; }
    .mark svg { margin-right: -14px; }
    .mark div { position: relative; }
    .mark strong { display: block; font: 700 14px/17px "Noto Sans CJK SC", sans-serif; }
    .mark em { display: block; font: 10px/12px "Liberation Sans", sans-serif; color: #777; padding-left: 1px; margin-top: 1px; }
    .status { height: 13px; flex: none; padding-left: 2px; line-height: 13px; color: #111; }
  `;

  private big(i: string, t: string, cls = "", more = false) {
    return html`<button class="big ${cls}">${icon(i, 21)}<span>${t}</span>${more ? caret() : nothing}</button>`;
  }
  private col(cls: string, items: Item[], size = 13) {
    return html`<div class="col ${cls}">${items.map(([i, t]) => html`<button>${icon(i, size)}<span>${t}</span></button>`)}</div>`;
  }
  private tool(i: string, size = 16, cls = "") {
    return html`<button class=${cls} aria-label=${i}>${icon(i, size)}</button>`;
  }
  private tail(i: string) {
    return html`<button class="tail" aria-label=${i}>${icon(i, 16)}${caret()}</button>`;
  }
  private combo(label: string, value: string, cls: string) {
    return html`<div class="combo ${cls}"><select aria-label=${label}><option>${value}</option></select>${caret()}</div>`;
  }

  private ribbon() {
    return html`<div class="ribbon">
      <div class="group">
        <div class="row pad2"><div class="col two c38">
          <button>&nbsp;&nbsp;${icon("pinkd", 17)}&nbsp;${caret()}</button><button>&nbsp;&nbsp;${icon("sketch", 17)}</button>
        </div></div>
        <div class="glabel"><span>构造</span>${caret()}</div>
      </div>
      <div class="group">
        <div class="row pad">${this.big("extrude", "拉伸")}${this.big("revolve", "旋转")}${this.big("bore", "孔")}
          ${this.col("c32", [["union", "合并"], ["subt", "减去"], ["inter", "求交"]])}
          ${this.col("c38", [["sweep", "扫掠"], ["sew", "缝合"], ["blend", "面倒圆"]])}
          ${this.big("boss", "更多", "w28", true)}</div>
        <div class="glabel"><span>基本</span>${caret()}</div>
      </div>
      <div class="group">
        <div class="row pad">${this.col("two c42", [["cubeT spark", "优化面"], ["cubeT copy", "复制面"]], 17)}
          ${this.col("c38", [["cubeT move", "移动"], ["cubeT tri", "镜像面"], ["cubeT grid", "阵列面"]], 14)}
          ${this.big("cycle", "更多", "w28", true)}</div>
        <div class="glabel"><span>同步建模</span>${caret()}</div>
      </div>
      <div class="group"><div class="row pad2">
        ${this.big("patch", "修补", "low")}${this.big("mesh", "剪断", "low")}
        ${this.col("c46", [["purple", "面对"], ["slabG sew", "X 型"], ["sheetG dens", "法向反向"]])}
        ${this.col("c46", [["block pen", "编辑截面"], ["cap ballO", "剪切截面"], ["wave pen", "绘制形状"]])}
      </div></div>
      <div class="group"><div class="row">${this.big("quilt", "更多", "w26", true)}</div></div>
      <div class="group"><div class="row">${this.big("tools", "工具箱", "w26", true)}</div></div>
      <div class="group"><div class="row">
        ${this.big("brush", "编辑对象显示", "low w50")}${this.big("palette", "指派特征颜色", "low w42")}${this.big("letterA", "文本", "low w28")}
        ${this.col("c46", [["engr", "刻字"], ["blank", "毛坯套裁"], ["punch", "冲模工程"]])}
        ${this.col("c86", [["comp", "模型比较（即将失效）"], ["comp", "比较体"], ["dens", "编辑实体密度"]])}
        ${this.col("c74", [["wave", "WAVE 几何链接器"], ["eq", "表达式"], ["spl", "样条（即将失效）"]])}
      </div></div>
      <div class="group rest"><div class="row"></div><div class="glabel"><span></span>${caret()}</div></div>
    </div>`;
  }

  private model() {
    const rings = [[231.5, 448, 40, 38, 34.5], [324, 448, 32, 30, 27], [396.5, 448, 22, 20, 17]];
    const holes = [[148, 378, 2], [139, 397.5, 3.5], [148, 418, 2], [148, 494, 2], [139, 513.5, 3.5]];
    return html`<svg viewBox="33 134 583 538" preserveAspectRatio="xMidYMid meet" role="img" aria-label="模型">
      <defs><linearGradient id="bx" x1="0" y1="0" x2="0" y2="1"><stop offset="0" stop-color="#c85550"/><stop offset="1" stop-color="#d95e5a"/></linearGradient></defs>
      <rect x="120" y="348" width="401.500" height="192.500" fill="url(#bx)" stroke="#dc5a5a" stroke-width="3"/>
      <path d="M267 352H517.500V537H278L273 510L511 446L260 378Z" fill="#d67e79" stroke="#a8504c" stroke-width=".8"/>
      <path d="M516 414L511 446L515 477L521 500V395Z" fill="#cc5553"/>
      <path d="M517.500 352V537" stroke="#a8504c" stroke-width=".8"/>
      <path d="M267 352L516 415L510 444L260 379Z" fill="#cf918d" stroke="#a05a55" stroke-width=".9"/>
      <path d="M273 510L278 537L515 476L510 447Z" fill="#cf918d" stroke="#a05a55" stroke-width=".9"/>
      <path d="M125 362Q125 357 131 357Q190 365 257 379Q390 408 512 444.500V446.500L186 525.500Q180 524 173 524.500L132 532.500Q125 532 125 527Z" fill="#f5b1b3" stroke="#a86466" stroke-width=".8"/>
      <path d="M129 365Q129 361 133 360Q190 369 257 382Q390 411 508 445L184 522.500Q180 521 173 522L133 529Q129 528 129 525Z" fill="#f0a9ab" stroke="#985456" stroke-width=".7"/>
      <path d="M127 362V529M128 528L133 532M126 360L133 360" stroke="#985456" stroke-width=".7"/>
      <path d="M186 525L511 446.500" stroke="#985456" stroke-width="1.800"/>
      ${rings.map(([x, y, a, b, d]) => svg`<g fill="none" stroke="#985456"><circle cx=${x} cy=${y} r=${a} stroke-width=".8"/><circle cx=${x} cy=${y} r=${b} stroke-width=".7"/><circle cx=${x} cy=${y} r=${d} stroke-width=".8"/></g>`)}
      ${holes.map(([x, y, r]) => svg`<circle cx=${x} cy=${y} r=${r} fill="#cb5d5e" stroke="#985456" stroke-width=".8"/>`)}
      <path d="M262 437V466" stroke="#7fa87f" stroke-width="2.500"/><path d="M266 469L293 471" stroke="#985456"/>
      <path d="M258 470L263 465" stroke="#2a2ac8" stroke-width="1.500"/>
      <g font-family="Liberation Sans, sans-serif" font-size="8">
        <text x="265" y="434" fill="#5a8a4a">YC</text><text x="261" y="470" fill="#2020d0">ZC</text><text x="288" y="467" fill="#d82030">XC</text>
        <text x="96" y="556" fill="#3a50d8">Z</text><text x="44" y="607" fill="#d84040">X</text>
      </g>
      <g fill="none" stroke="#2f3a32" stroke-width="1.200"><circle cx="524.500" cy="434.500" r="6.500" stroke="#8a968c" stroke-dasharray="7.200 3" stroke-dashoffset="-1.500"/><path d="M515 434.500H534M524.500 426V443"/></g>
      <rect x="85.500" y="590.500" width="26" height="25.500" fill="#86888680" stroke="#b4b4b4"/>
      <path d="M98.500 590V570" stroke="#1838e0" stroke-width="3"/><path d="M95 572L98.500 559L102 572Z" fill="#1838e0"/>
      <path d="M86 604H66" stroke="#c82828" stroke-width="2.500"/><path d="M68 600.500L54 604L68 607Z" fill="#d82828"/>
      <circle cx="98.500" cy="603.500" r="3" fill="#1f7a1f"/>
    </svg>`;
  }

  private navigator() {
    const cells = (r?: Row) => html`<tr class=${r?.k ?? ""}>
      <td>${r ? html`<div class=${classMap({ child: r.d === 1 })}>${r.x ? html`<button class="tog">${r.x}</button>` : nothing}${r.i.map((n) => icon(n, 10))}<span class="label">${r.t}</span></div>` : nothing}</td>
      <td class="mid hl">${r?.k === "sel" ? icon("tower", 9) : nothing}</td>
      <td class="mid hl">${r?.ok ? icon("chk", 10) : nothing}</td><td class="hl"></td><td></td></tr>`;
    return html`<section class="nav">
      <h2>${icon("box", 9)}部件导航器</h2>
      <div class="grid"><table>
        <colgroup><col><col class="k1"><col class="k1"><col class="k4"><col class="k5"></colgroup>
        <thead><tr><th>名称 &nbsp; ▲</th><th>当</th><th>最</th><th>附注</th><th></th></tr></thead>
        <tbody>${TREE.map((r) => cells(r))}${Array.from({ length: 27 }, () => cells())}</tbody>
      </table></div>
      ${["搜索", "相关性", "细节", "预览"].map((t) => html`<button class="acc"><svg viewBox="0 0 3 5" width="3" height="5" aria-hidden="true"><path d="M0 0L3 2.500L0 5Z" fill="#1f4a67"/></svg>${t}</button>`)}
    </section>`;
  }

  render() {
    const t = (n: string, s = 14, k = "") => this.tool(n, s, k);
    return html`
      <header class="title">
        <span class="logo">NX</span>
        <div class="tools">
          ${t("tNew", 13)}${t("tOpen", 12, "gapped")}${t("tSave", 12)}${t("tPlane", 11, "gapped")}${t("tUndo", 12)}${caret()}
          ${t("tRedo", 12, "faded gapped")}${t("tCut", 10, "faded")}${t("tDoc", 10, "faded")}${t("tDoc", 10, "faded")}${t("tStar", 10, "faded gapped")}
          ${t("tWin", 12)}${caret()}&nbsp;${t("tMic", 12, "gapped")}${t("tPlug", 12, "gapped")}${t("tCasc", 12)}${t("tFrame", 11)}<span>窗口</span>${caret()}${caret()}
        </div>
        <h1>NX - 建模</h1>
        <span class="brand">SIEMENS</span>
        <div class="wins">${t("tMin", 10)}${t("tMax", 9)}${t("tX", 9)}</div>
      </header>
      <div class="menu">
        <nav>${MENU.map((m, i) => html`<button class=${classMap({ on: i === this.tab })} @click=${() => (this.tab = i)}>${m}</button>`)}</nav>
        <label class="find"><input placeholder="查找命令" aria-label="查找命令">${icon("search", 11)}</label>
        <div class="right">${t("tFit", 11)}${t("tUp", 11)}${t("tHelp", 11)}${t("tBang", 11)}</div>
      </div>
      ${this.ribbon()}
      <div class="select">
        <button class="main">${icon("burger", 12)}<span>菜单(M)</span>${caret()}</button><span class="sep"></span>
        ${this.combo("选择过滤器", "无选择过滤器", "w92")}${t("funnelG", 16)}${this.combo("选择范围", "整个装配", "w96")}
        ${t("cubeR", 16, "hot")}${t("linkG", 16)}${this.tail("funnel calc")}${t("brackD", 16)}${t("cubeW tgt", 16)}${this.tail("rectO tgt")}
        ${t("cubeF", 16)}${t("cubeF", 16)}<span class="sep mid"></span>${this.combo("图层", "1", "w30")}
        ${t("ban", 16)}${t("swap", 16)}${t("csys", 16)}<span>简化装配（原有）</span>
        <div class="cluster">${["fitS", "fitF", "shoe", "hex", "eye calc", "layers cog", "win"].map((n) => this.tail(n))}<span class="sep"></span></div>
        <span class="push">${caret()}</span>
      </div>
      <div class="main-area">
        <div class="left">
          <div class="list">${LEFT.map((n) => t(n, 16))}</div>
          <div class="pairs">${["block", "sheetT", "cylP", "seg"].map((n) => t(n, 12))}</div>
          <div class="foot">${caret()}</div>
        </div>
        <main class="work">
          <div class="tabs"><div class="tab">${icon("shoe", 10)}<span>_model1.prt</span>${icon("tPage", 8)}<button aria-label="关闭">${icon("tX", 7)}</button></div></div>
          <div class="view">${this.model()}</div>
        </main>
        <div class="solids"><div class="list">${SOLIDS.map((n) => t(n, 16))}</div><div class="end">${caret()}</div></div>
        ${this.navigator()}
        <div class="rail">${RESOURCE.map(([n, k]) => t(n, n === "gear" ? 9 : 16, k))}</div>
      </div>
      <div class="bottom">
        <div class="list">${BOTTOM.map((n) => t(n, 16))}</div>
        <div class="mini">${[...MINI_A, ...MINI_B].map((n) => t(n, 11))}</div>
        ${caret()}
        <div class="mark">
          <svg viewBox="0 0 56 44" width="56" height="44" aria-hidden="true">
            <circle cx="21" cy="23" r="15" fill="none" stroke="#4a4a4a" stroke-width="4"/>
            <circle cx="21" cy="23" r="18" fill="none" stroke="#4a4a4a" stroke-width="4" stroke-dasharray="5 6.300"/>
            <path d="M10 37L27 19Q24 9 34 5L32 12L36 15L41 10Q43 20 33 23L16 41Q11 42 10 37Z" fill="#fff" stroke="#555" stroke-width="1.500"/>
          </svg>
          <div><strong>机械资源网</strong><em>www.u557.com</em></div>
        </div>
      </div>
      <footer class="status">选择对象并使用 MB3，或者双击某一对象</footer>`;
  }
}
